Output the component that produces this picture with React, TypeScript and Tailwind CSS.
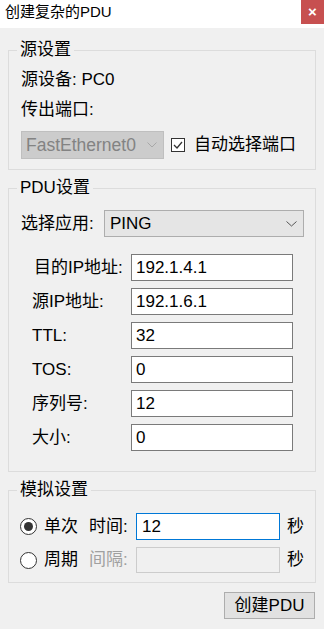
import React from "react";

const font = { fontFamily: '"Liberation Sans", "Noto Sans CJK SC", sans-serif' };

function Group({ title, className, children }: { title: string; className?: string; children: React.ReactNode }) {
  return (
    <div className={`relative border border-[#dcdcdc] ${className ?? ""}`}>
      <span className="absolute -top-[11px] left-[8px] bg-[#f0f0f0] px-[3px] text-[17px] leading-[20px] text-black">
        {title}
      </span>
      {children}
    </div>
  );
}

function Field({ label, value, labelClass }: { label: string; value: string; labelClass?: string }) {
  return (
    <div className="flex h-[27px] items-center">
      <span className={`w-[110px] shrink-0 whitespace-nowrap text-[17px] leading-[20px] text-black ${labelClass ?? "pl-[11px]"}`}>
        {label}
      </span>
      <div className="flex h-[27px] w-[162px] shrink-0 items-center border border-[#7a7a7a] bg-white pl-[4px] text-[17px] text-black">
        {value}
      </div>
    </div>
  );
}

function Radio({ checked }: { checked?: boolean }) {
  return (
    <span className="flex h-[17px] w-[17px] shrink-0 items-center justify-center rounded-full border border-[#333] bg-white">
      {checked && <span className="h-[9px] w-[9px] rounded-full bg-[#333]" />}
    </span>
  );
}

export default function App() {
  const fields = [
    { label: "目的IP地址:", value: "192.1.4.1", labelClass: "pl-[13px]" },
    { label: "源IP地址:", value: "192.1.6.1" },
    { label: "TTL:", value: "32" },
    { label: "TOS:", value: "0" },
    { label: "序列号:", value: "12" },
    { label: "大小:", value: "0" },
  ];

  return (
    <div className="flex h-[629px] w-[324px] flex-col bg-[#f0f0f0]" style={font}>
      {/* title bar */}
      <div className="flex h-[28px] items-start justify-between bg-white">
        <span className="pl-[5px] pt-[3px] text-[15px] leading-[18px] text-black">创建复杂的PDU</span>
        <span className="flex h-[24px] w-[23px] items-center justify-center bg-[#c75050] text-[15px] font-bold text-white">
          ×
        </span>
      </div>

      <div className="flex flex-col px-[8px]">
        {/* 源设置 */}
        <Group title="源设置" className="mt-[22px] pl-[12px] pt-[19px] pb-[10px]">
          <div className="text-[17px] leading-[20px] text-black">源设备: PC0</div>
          <div className="mt-[10px] text-[17px] leading-[20px] text-black">传出端口:</div>
          <div className="mt-[11px] flex items-center">
            <div className="flex h-[28px] w-[143px] shrink-0 items-center justify-between border border-[#bfbfbf] bg-[#cccccc] pl-[4px] pr-[6px] text-[17.5px] text-[#838383]">
              <span>FastEthernet0</span>
              <svg width="10" height="6" viewBox="0 0 10 6" fill="none" stroke="#a8a8a8" strokeWidth="1">
                <path d="M0.5 0.5 L5 5 L9.5 0.5" />
              </svg>
            </div>
            <span className="ml-[7px] flex h-[14px] w-[14px] items-center justify-center border border-[#333] bg-white">
              <svg width="10" height="8" viewBox="0 0 10 8" fill="none" stroke="#333" strokeWidth="1.3">
                <path d="M1 4 L4 7 L9 1" />
              </svg>
            </span>
            <span className="ml-[9px] text-[17px] leading-[20px] text-black">自动选择端口</span>
          </div>
        </Group>

        {/* PDU设置 */}
        <Group title="PDU设置" className="mt-[18px] pl-[12px] pt-[21px] pb-[20px]">
          <div className="flex items-center">
            <span className="w-[83px] shrink-0 text-[17px] leading-[20px] text-black">选择应用:</span>
            <div className="flex h-[27px] w-[200px] shrink-0 items-center justify-between border border-[#adadad] bg-[#e5e5e5] pl-[5px] pr-[6px] text-[17px] text-black">
              <span>PING</span>
              <svg width="11" height="6" viewBox="0 0 11 6" fill="none" stroke="#555" strokeWidth="1">
                <path d="M0.5 0.5 L5.5 5 L10.5 0.5" />
              </svg>
            </div>
          </div>
          <div className="mt-[17px] flex flex-col gap-[7px]">
            {fields.map((f) => (
              <Field key={f.label} label={f.label} value={f.value} labelClass={f.labelClass} />
            ))}
          </div>
        </Group>

        {/* 模拟设置 */}
        <Group title="模拟设置" className="mt-[18px] pl-[11px] pt-[22px] pb-[9px]">
          <div className="flex h-[27px] items-center">
            <Radio checked />
            <span className="ml-[7px] w-[45px] shrink-0 text-[17px] leading-[20px] text-black">单次</span>
            <span className="w-[47px] shrink-0 text-[17px] leading-[20px] text-black">时间:</span>
            <div className="flex h-[27px] w-[144px] shrink-0 items-center border border-[#0078d7] bg-white pl-[5px] text-[17px] text-black">
              12
            </div>
            <span className="ml-[7px] text-[17px] leading-[20px] text-black">秒</span>
          </div>
          <div className="mt-[7px] flex h-[26px] items-center">
            <Radio />
            <span className="ml-[7px] w-[45px] shrink-0 text-[17px] leading-[20px] text-black">周期</span>
            <span className="w-[47px] shrink-0 text-[17px] leading-[20px] text-[#a0a0a0]">间隔:</span>
            <div className="h-[26px] w-[144px] shrink-0 border border-[#cccccc] bg-[#f0f0f0]" />
            <span className="ml-[7px] text-[17px] leading-[20px] text-black">秒</span>
          </div>
        </Group>

        <div className="mt-[9px] flex justify-end pr-[1px]">
          <button className="flex h-[27px] w-[91px] items-center justify-center border border-[#adadad] bg-[#e1e1e1] text-[17px] text-black">
            创建PDU
          </button>
        </div>
      </div>
    </div>
  );
}
